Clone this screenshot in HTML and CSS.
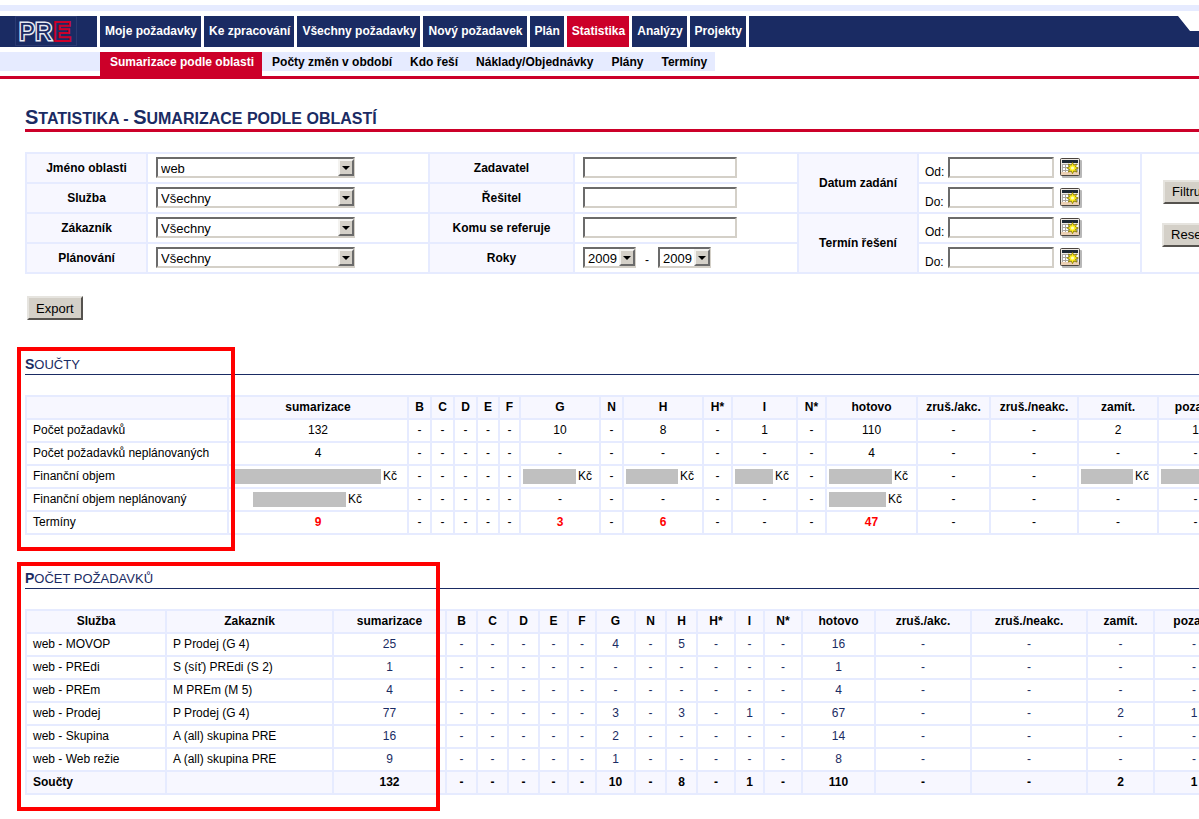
FILE: index.html
```html
<!DOCTYPE html>
<html lang="cs">
<head>
<meta charset="utf-8">
<title>Statistika - Sumarizace podle oblastí</title>
<link rel="stylesheet" href="styles.css">
</head>
<body>
<svg class="defs" aria-hidden="true">
  <symbol id="cal" viewBox="0 0 22 20">
    <rect x="2" y="2" width="20" height="18" rx="1" fill="#b8b8b8"/>
    <rect x="0.5" y="0.5" width="19" height="17" rx="1" fill="#eeeae4" stroke="#4a4440"/>
    <rect x="1" y="14" width="18" height="3" fill="#ecd0b4"/>
    <rect x="2" y="2" width="16" height="3" fill="#1c2733"/>
    <path d="M2 6h16v8H2z" fill="#a9a5a2"/>
    <path d="M3 7h2v2H3zM6 7h2v2H6zM3 10h2v2H3zM6 10h2v2H6zM3 13h2v1H3zM6 13h2v1H6zM9 7h1v1H9zM16 7h2v2h-2z" fill="#fff"/>
    <path d="M12.500 4.500l1.300 2.700 2.900-1.200-1.200 2.800 2.800 1.200-2.800 1.300 1.200 2.800-2.900-1.200-1.300 2.800-1.200-2.800-2.900 1.200 1.200-2.800-2.800-1.300 2.800-1.200-1.200-2.800 2.900 1.200z" fill="#ffee20" stroke="#8a7a00" stroke-width="0.800"/>
    <circle cx="12.500" cy="10" r="1.600" fill="#ffffc0"/>
  </symbol>
</svg>

<header>
  <div class="strip"></div>
  <nav class="main-nav">
    <a class="logo" href="#" aria-label="PRE">
      <svg width="62" height="30" viewBox="0 0 62 30">
        <rect x="0.500" y="0.500" width="61" height="29" fill="none" stroke="#2b3a72"/>
        <text x="4" y="24" class="logo-pr">PR</text>
        <text x="39" y="24" class="logo-e">E</text>
      </svg>
    </a>
    <a href="#">Moje požadavky</a>
    <a href="#">Ke zpracování</a>
    <a href="#">Všechny požadavky</a>
    <a href="#">Nový požadavek</a>
    <a href="#">Plán</a>
    <a href="#" class="active">Statistika</a>
    <a href="#">Analýzy</a>
    <a href="#">Projekty</a>
    <span class="rest"></span>
  </nav>
  <nav class="sub-nav">
    <span class="lead"></span>
    <a href="#" class="active">Sumarizace podle oblasti</a>
    <a href="#">Počty změn v období</a>
    <a href="#">Kdo řeší</a>
    <a href="#">Náklady/Objednávky</a>
    <a href="#">Plány</a>
    <a href="#">Termíny</a>
  </nav>
</header>

<main>
  <h1><span class="cap">S</span>tatistika - <span class="cap">S</span>umarizace podle oblastí</h1>

  <form>
    <table class="grid filter">
      <colgroup><col><col><col><col><col><col><col></colgroup>
      <tr>
        <th><label for="area">Jméno oblasti</label></th>
        <td><span class="select"><select id="area"><option>web</option></select></span></td>
        <th><label for="author">Zadavatel</label></th>
        <td><input id="author" type="text"></td>
        <th rowspan="2">Datum zadání</th>
        <td><div class="date"><label for="d1">Od:</label><input id="d1" type="text"><button type="button" class="cal" aria-label="Kalendář"><svg width="22" height="20"><use href="#cal"/></svg></button></div></td>
        <td rowspan="4" class="action-cell"><div class="actions"><button class="btn">Filtruj</button><button class="btn" type="reset">Reset</button></div></td>
      </tr>
      <tr>
        <th><label for="service">Služba</label></th>
        <td><span class="select"><select id="service"><option>Všechny</option></select></span></td>
        <th><label for="solver">Řešitel</label></th>
        <td><input id="solver" type="text"></td>
        <td><div class="date"><label for="d2">Do:</label><input id="d2" type="text"><button type="button" class="cal" aria-label="Kalendář"><svg width="22" height="20"><use href="#cal"/></svg></button></div></td>
      </tr>
      <tr>
        <th><label for="customer">Zákazník</label></th>
        <td><span class="select"><select id="customer"><option>Všechny</option></select></span></td>
        <th><label for="report">Komu se referuje</label></th>
        <td><input id="report" type="text"></td>
        <th rowspan="2">Termín řešení</th>
        <td><div class="date"><label for="d3">Od:</label><input id="d3" type="text"><button type="button" class="cal" aria-label="Kalendář"><svg width="22" height="20"><use href="#cal"/></svg></button></div></td>
      </tr>
      <tr>
        <th><label for="planning">Plánování</label></th>
        <td><span class="select"><select id="planning"><option>Všechny</option></select></span></td>
        <th><label for="year">Roky</label></th>
        <td><div class="years"><span class="select year"><select id="year"><option>2009</option></select></span><span>-</span><span class="select year"><select aria-label="Roky do"><option>2009</option></select></span></div></td>
        <td><div class="date"><label for="d4">Do:</label><input id="d4" type="text"><button type="button" class="cal" aria-label="Kalendář"><svg width="22" height="20"><use href="#cal"/></svg></button></div></td>
      </tr>
    </table>
    <button type="button" class="btn export">Export</button>
  </form>

  <section>
    <h2>Součty</h2>
    <table class="grid totals">
      <colgroup><col><col><col><col><col><col><col><col><col><col><col><col><col><col><col><col><col><col></colgroup>
      <tr><th></th><th>sumarizace</th><th>B</th><th>C</th><th>D</th><th>E</th><th>F</th><th>G</th><th>N</th><th>H</th><th>H*</th><th>I</th><th>N*</th><th>hotovo</th><th>zruš./akc.</th><th>zruš./neakc.</th><th>zamít.</th><th>pozast.</th></tr>
      <tr><td class="name">Počet požadavků</td><td>132</td><td>-</td><td>-</td><td>-</td><td>-</td><td>-</td><td>10</td><td>-</td><td>8</td><td>-</td><td>1</td><td>-</td><td>110</td><td>-</td><td>-</td><td>2</td><td>1</td></tr>
      <tr><td class="name">Počet požadavků neplánovaných</td><td>4</td><td>-</td><td>-</td><td>-</td><td>-</td><td>-</td><td>-</td><td>-</td><td>-</td><td>-</td><td>-</td><td>-</td><td>4</td><td>-</td><td>-</td><td>-</td><td>-</td></tr>
      <tr><td class="name">Finanční objem</td><td class="money"><i style="width:150px"></i>Kč</td><td>-</td><td>-</td><td>-</td><td>-</td><td>-</td><td class="money"><i style="width:53px"></i>Kč</td><td>-</td><td class="money"><i style="width:52px"></i>Kč</td><td>-</td><td class="money"><i style="width:38px"></i>Kč</td><td>-</td><td class="money"><i style="width:63px"></i>Kč</td><td>-</td><td>-</td><td class="money"><i style="width:52px"></i>Kč</td><td class="money"><i style="width:50px"></i>Kč</td></tr>
      <tr><td class="name">Finanční objem neplánovaný</td><td class="money inset"><i style="width:93px"></i>Kč</td><td>-</td><td>-</td><td>-</td><td>-</td><td>-</td><td>-</td><td>-</td><td>-</td><td>-</td><td>-</td><td>-</td><td class="money"><i style="width:57px"></i>Kč</td><td>-</td><td>-</td><td>-</td><td>-</td></tr>
      <tr class="late"><td class="name">Termíny</td><td><b>9</b></td><td>-</td><td>-</td><td>-</td><td>-</td><td>-</td><td><b>3</b></td><td>-</td><td><b>6</b></td><td>-</td><td>-</td><td>-</td><td><b>47</b></td><td>-</td><td>-</td><td>-</td><td>-</td></tr>
    </table>
    <div class="mark mark-totals"></div>
  </section>

  <section>
    <h2>Počet požadavků</h2>
    <table class="grid counts">
      <colgroup><col><col><col><col><col><col><col><col><col><col><col><col><col><col><col><col><col><col><col></colgroup>
      <tr><th>Služba</th><th>Zakazník</th><th>sumarizace</th><th>B</th><th>C</th><th>D</th><th>E</th><th>F</th><th>G</th><th>N</th><th>H</th><th>H*</th><th>I</th><th>N*</th><th>hotovo</th><th>zruš./akc.</th><th>zruš./neakc.</th><th>zamít.</th><th>pozast.</th></tr>
      <tr><td class="name">web - MOVOP</td><td class="name">P Prodej (G 4)</td><td><a href="#">25</a></td><td>-</td><td>-</td><td>-</td><td>-</td><td>-</td><td><a href="#">4</a></td><td>-</td><td><a href="#">5</a></td><td>-</td><td>-</td><td>-</td><td><a href="#">16</a></td><td>-</td><td>-</td><td>-</td><td>-</td></tr>
      <tr><td class="name">web - PREdi</td><td class="name">S (síť) PREdi (S 2)</td><td><a href="#">1</a></td><td>-</td><td>-</td><td>-</td><td>-</td><td>-</td><td>-</td><td>-</td><td>-</td><td>-</td><td>-</td><td>-</td><td><a href="#">1</a></td><td>-</td><td>-</td><td>-</td><td>-</td></tr>
      <tr><td class="name">web - PREm</td><td class="name">M PREm (M 5)</td><td><a href="#">4</a></td><td>-</td><td>-</td><td>-</td><td>-</td><td>-</td><td>-</td><td>-</td><td>-</td><td>-</td><td>-</td><td>-</td><td><a href="#">4</a></td><td>-</td><td>-</td><td>-</td><td>-</td></tr>
      <tr><td class="name">web - Prodej</td><td class="name">P Prodej (G 4)</td><td><a href="#">77</a></td><td>-</td><td>-</td><td>-</td><td>-</td><td>-</td><td><a href="#">3</a></td><td>-</td><td><a href="#">3</a></td><td>-</td><td><a href="#">1</a></td><td>-</td><td><a href="#">67</a></td><td>-</td><td>-</td><td><a href="#">2</a></td><td><a href="#">1</a></td></tr>
      <tr><td class="name">web - Skupina</td><td class="name">A (all) skupina PRE</td><td><a href="#">16</a></td><td>-</td><td>-</td><td>-</td><td>-</td><td>-</td><td><a href="#">2</a></td><td>-</td><td>-</td><td>-</td><td>-</td><td>-</td><td><a href="#">14</a></td><td>-</td><td>-</td><td>-</td><td>-</td></tr>
      <tr><td class="name">web - Web režie</td><td class="name">A (all) skupina PRE</td><td><a href="#">9</a></td><td>-</td><td>-</td><td>-</td><td>-</td><td>-</td><td><a href="#">1</a></td><td>-</td><td>-</td><td>-</td><td>-</td><td>-</td><td><a href="#">8</a></td><td>-</td><td>-</td><td>-</td><td>-</td></tr>
      <tr><th class="name">Součty</th><th></th><th>132</th><th>-</th><th>-</th><th>-</th><th>-</th><th>-</th><th>10</th><th>-</th><th>8</th><th>-</th><th>1</th><th>-</th><th>110</th><th>-</th><th>-</th><th>2</th><th>1</th></tr>
    </table>
    <div class="mark mark-counts"></div>
  </section>
</main>
</body>
</html>
```
FILE: styles.css
```css
:root {
  --navy: #1a2b63;
  --red: #cc0029;
  --line: #e6ebff;
  --head: #f7f7ff;
  --face: #d4d0c8;
}

*, *::before, *::after { box-sizing: border-box; }

body {
  margin: 0;
  background: #fff;
  color: #000;
  font: 12px/15px "Liberation Sans", Arial, sans-serif;
  overflow-x: hidden;
}

.defs { position: absolute; width: 0; height: 0; }

a { color: var(--navy); text-decoration: none; }

/* Header */
.strip { height: 6px; margin: 5px 0; background: var(--line); }

.main-nav {
  display: flex;
  gap: 3px;
  height: 31px;
  margin-top: 5px;
  clip-path: polygon(0 0, calc(100% - 21px) 0, calc(100% - 9px) 15px, 100% 15px, 100% 100%, 0 100%);
}
.main-nav a {
  padding: 0 4px 0 5px;
  background: var(--navy);
  color: #fff;
  font-weight: bold;
  line-height: 31px;
  white-space: nowrap;
}
.main-nav a.active { background: var(--red); }
.main-nav .logo { width: 97px; padding: 0 0 0 15px; }
.main-nav .rest { flex: 1; background: var(--navy); }
.logo svg { display: block; }
.logo-pr, .logo-e {
  font: 24px "Liberation Sans", Arial, sans-serif;
  fill: var(--navy);
  stroke: #e8eaf2;
  stroke-width: 3px;
  paint-order: stroke;
}
.logo-e { stroke: var(--red); stroke-width: 4px; }

.sub-nav {
  display: flex;
  align-items: flex-start;
  height: 27px;
  margin-top: 5px;
  border-bottom: 3px solid var(--red);
}
.sub-nav .lead { width: 100px; height: 19px; background: var(--line); }
.sub-nav a {
  height: 19px;
  padding: 0 8px 0 10px;
  background: var(--line);
  color: #000;
  font-weight: bold;
  line-height: 21px;
  white-space: nowrap;
}
.sub-nav a.active { height: 24px; background: var(--red); color: #fff; }

/* Content */
main { padding: 0 0 24px 25px; }

h1 {
  margin: 29px 0 20px;
  border-bottom: 3px solid var(--red);
  color: var(--navy);
  font-size: 16px;
  line-height: 21px;
  text-transform: uppercase;
}
h1 .cap { font-size: 20px; line-height: 16px; }

h2 {
  margin: 0 0 20px;
  border-bottom: 1px solid var(--navy);
  color: var(--navy);
  font-size: 13px;
  font-weight: normal;
  line-height: 18px;
  text-transform: uppercase;
}
h2::first-letter { font-size: 14px; font-weight: bold; }

section { position: relative; margin-top: 35px; }
section + section { margin-top: 34px; }

.grid {
  table-layout: fixed;
  border-spacing: 2px;
  background: var(--line);
}
.grid th, .grid td {
  height: 21px;
  padding: 0;
  background: #fff;
  text-align: center;
  white-space: nowrap;
}
.grid th { background: var(--head); }
.grid .name { padding-left: 6px; text-align: left; }

/* Filter */
.filter { width: 1211px; }
.filter th, .filter td { height: 28px; }
.grid.filter td { padding: 3px 0 0 8px; text-align: left; vertical-align: top; }
.grid.filter .action-cell { padding: 0; vertical-align: middle; }
.filter col:nth-child(1) { width: 119px; }
.filter col:nth-child(2) { width: 280px; }
.filter col:nth-child(3) { width: 143px; }
.filter col:nth-child(4) { width: 222px; }
.filter col:nth-child(5) { width: 118px; }
.filter col:nth-child(6) { width: 221px; }

input, select {
  display: block;
  height: 21px;
  margin: 0;
  border: 2px solid;
  border-color: #6b6b6b var(--face) var(--face) #6b6b6b;
  border-radius: 0;
  background: #fff;
  color: #000;
  font: 13px "Liberation Sans", Arial, sans-serif;
}
input { width: 154px; padding: 0 2px; }
select { width: 100%; padding: 1px 0 0 3px; appearance: none; }

.select { display: block; position: relative; width: 199px; }
.select.year { width: 53px; }
.select::before {
  content: "";
  position: absolute;
  top: 2px;
  right: 1px;
  width: 16px;
  height: 17px;
  border: 2px solid;
  border-color: #f4f3f0 #6b6b6b #6b6b6b #f4f3f0;
  background: var(--face);
  pointer-events: none;
}
.select::after {
  content: "";
  position: absolute;
  top: 9px;
  right: 5px;
  border: 4px solid transparent;
  border-top-color: #000;
  border-bottom: 0;
  pointer-events: none;
}

.years, .date { display: flex; align-items: flex-end; }
.years { gap: 9px; }
.date label { margin-right: 4px; line-height: 12px; }
.date input { width: 106px; }
.filter .date { margin-left: -2px; }
.cal { height: 20px; margin-left: 6px; padding: 0; border: 0; background: none; }
.cal svg { display: block; }

.btn {
  height: 24px;
  padding: 0 7px;
  border: 2px solid;
  border-color: #e6e4df #55524e #55524e #e6e4df;
  border-radius: 0;
  background: var(--face);
  color: #000;
  font: 13px "Liberation Sans", Arial, sans-serif;
}
.actions { display: flex; flex-direction: column; align-items: center; gap: 19px; }
.export { display: block; margin: 22px 0 0 2px; }

/* Totals */
.totals { width: 1209px; }
.totals col:nth-child(1) { width: 200px; }
.totals col:nth-child(2) { width: 178px; }
.totals col:nth-child(n+3) { width: 21px; }
.totals col:nth-child(6) { width: 20px; }
.totals col:nth-child(7) { width: 19px; }
.totals col:nth-child(8), .totals col:nth-child(10) { width: 78px; }
.totals col:nth-child(11), .totals col:nth-child(13) { width: 27px; }
.totals col:nth-child(12) { width: 63px; }
.totals col:nth-child(14) { width: 89px; }
.totals col:nth-child(15) { width: 71px; }
.totals col:nth-child(16) { width: 86px; }
.totals col:nth-child(17) { width: 78px; }
.totals col:nth-child(18) { width: 73px; }
.grid .money { padding-left: 2px; text-align: left; }
.grid .money.inset { padding-left: 24px; }
.money i {
  display: inline-block;
  height: 15px;
  margin-right: 2px;
  background: #c0c0c0;
  vertical-align: middle;
}
.late b { color: #f00; }

/* Counts */
.counts { width: 1210px; }
.counts td:nth-child(n+3) { color: var(--navy); }
.counts col:nth-child(1) { width: 138px; }
.counts col:nth-child(2) { width: 165px; }
.counts col:nth-child(3) { width: 111px; }
.counts col:nth-child(n+4) { width: 29px; }
.counts col:nth-child(7), .counts col:nth-child(13) { width: 27px; }
.counts col:nth-child(8) { width: 26px; }
.counts col:nth-child(9) { width: 37px; }
.counts col:nth-child(12), .counts col:nth-child(14) { width: 36px; }
.counts col:nth-child(15) { width: 71px; }
.counts col:nth-child(16) { width: 94px; }
.counts col:nth-child(17) { width: 114px; }
.counts col:nth-child(18) { width: 65px; }
.counts col:nth-child(19) { width: 78px; }

/* Highlight frames laid over the first columns */
.mark {
  position: absolute;
  top: -8px;
  bottom: -16px;
  left: -8px;
  border: 4px solid #f00;
  pointer-events: none;
}
.mark-totals { width: 218px; }
.mark-counts { top: -7px; width: 423px; }
```
